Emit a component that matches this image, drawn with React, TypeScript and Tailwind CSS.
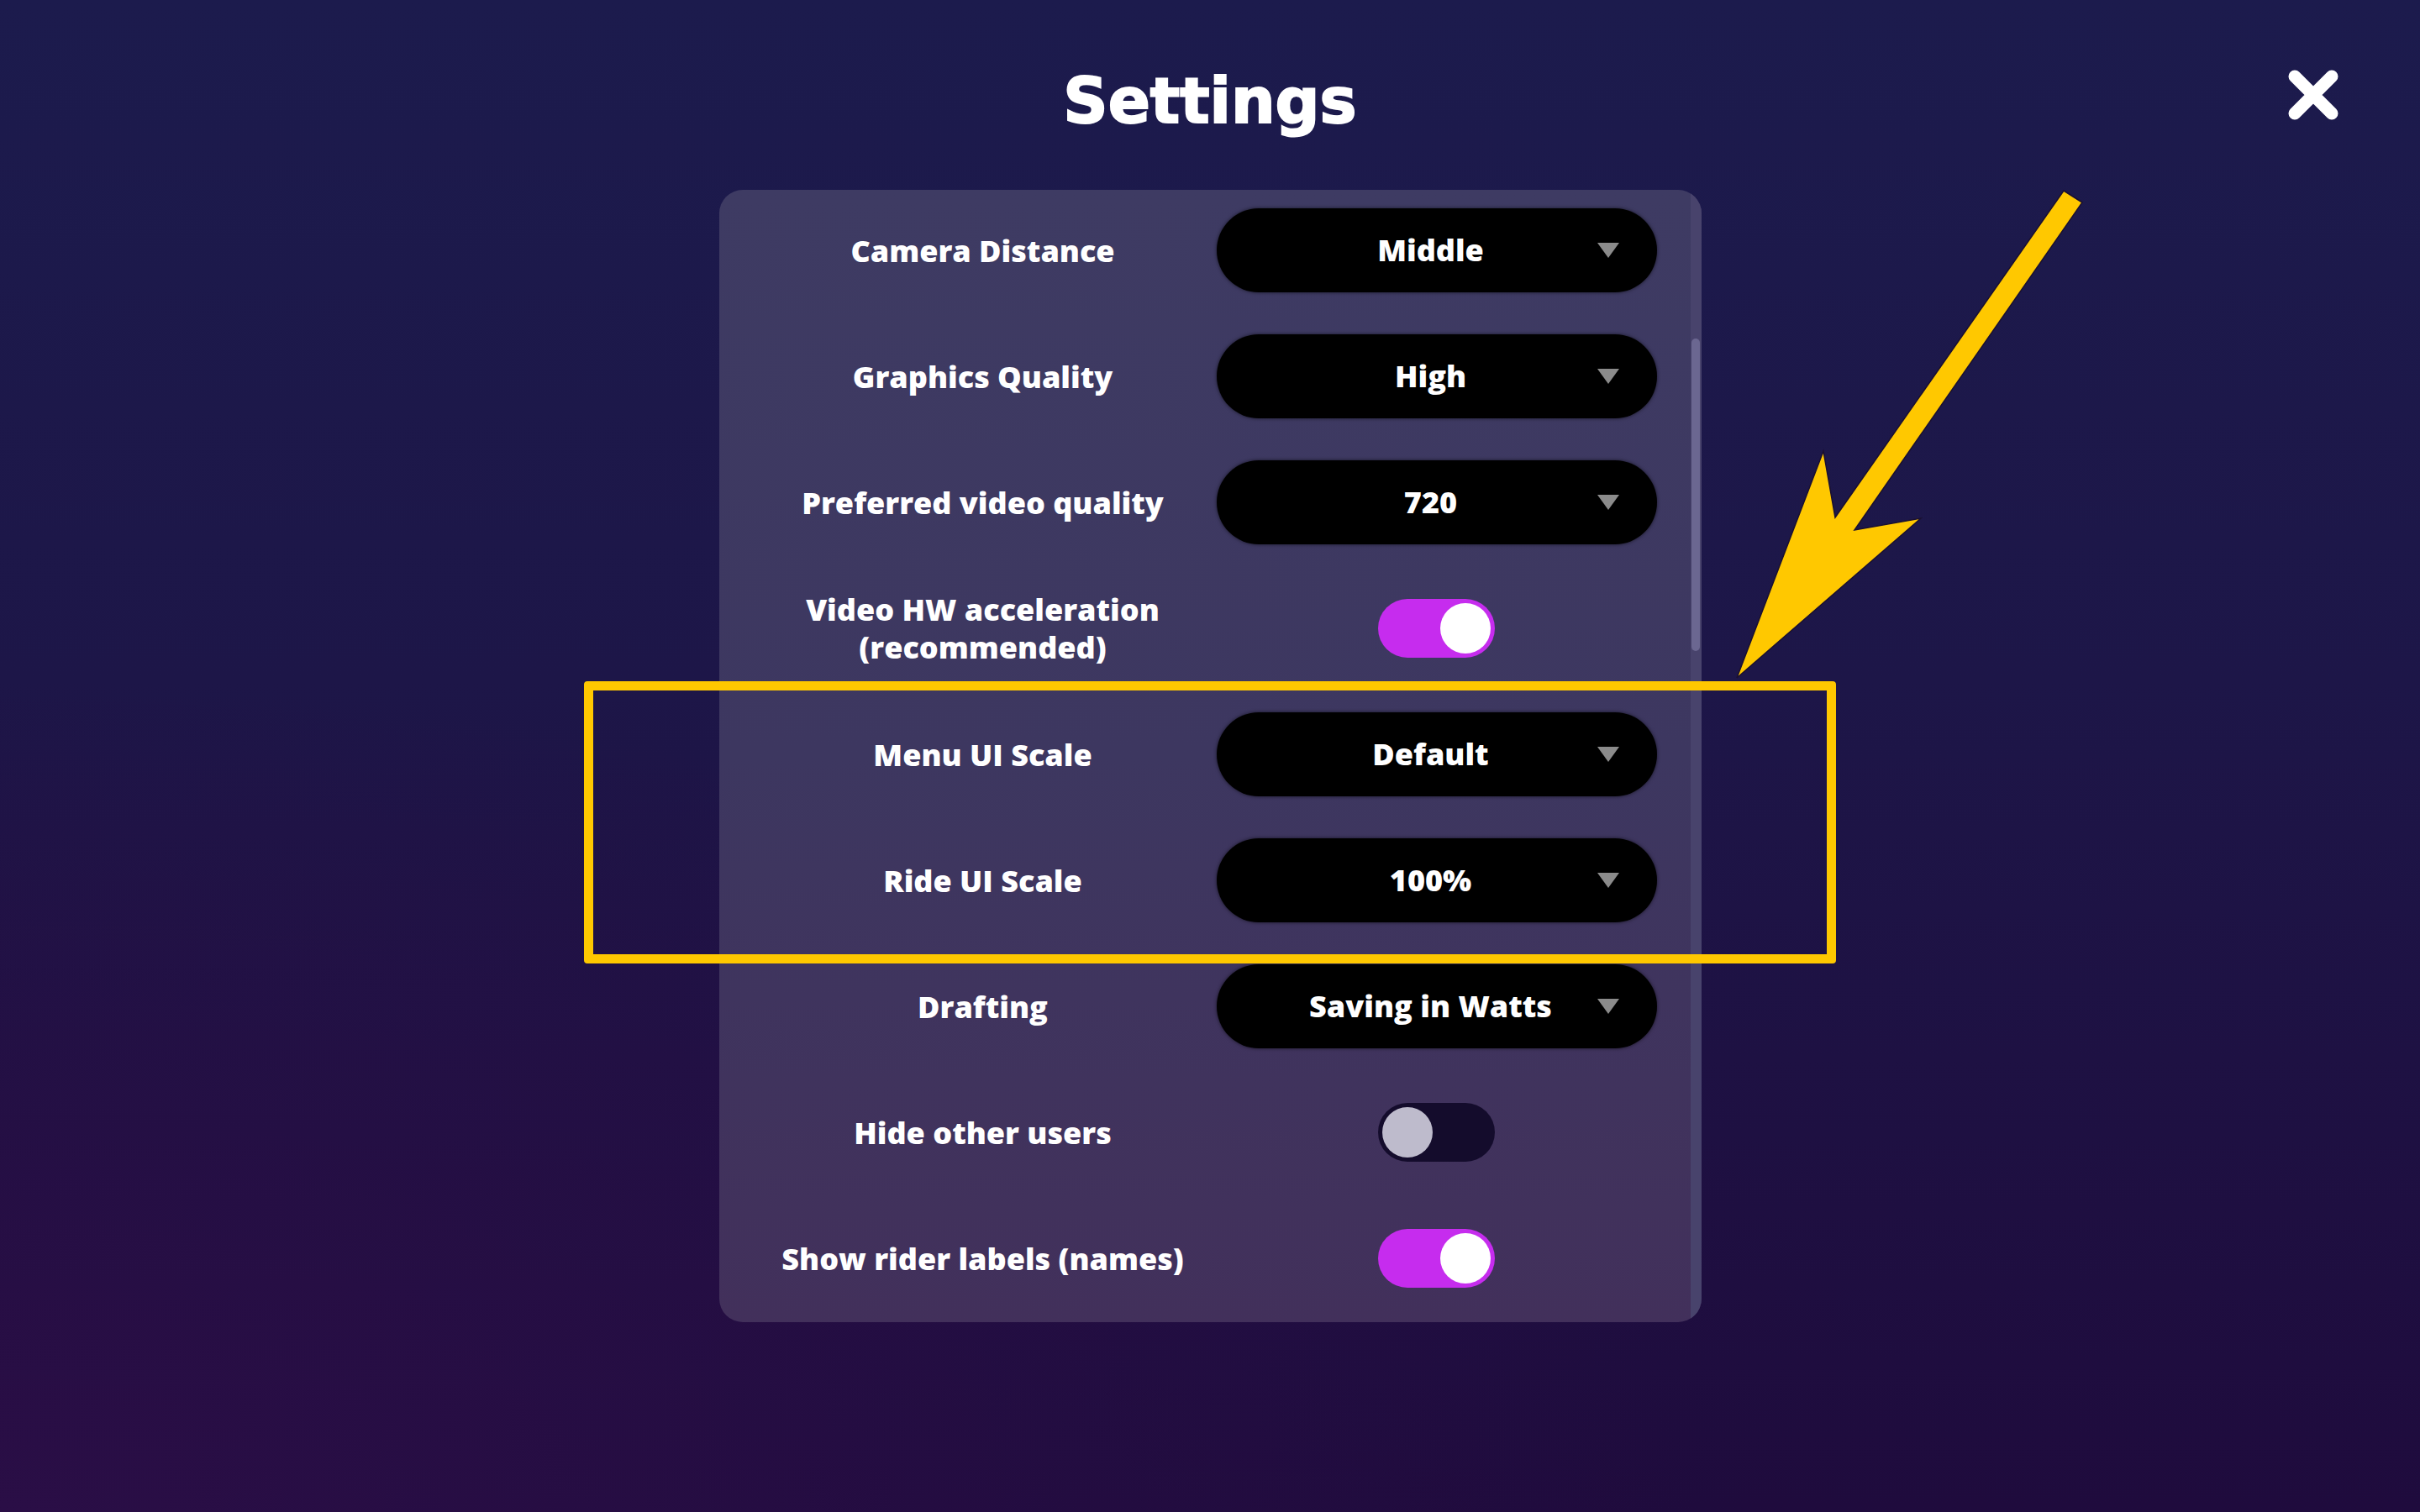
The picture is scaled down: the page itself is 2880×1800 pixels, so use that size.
import { useState } from 'react';

type Row =
  | { kind: 'select'; label: string; value: string }
  | { kind: 'toggle'; label: string[]; on: boolean };

const rows: Row[] = [
  { kind: 'select', label: 'Camera Distance', value: 'Middle' },
  { kind: 'select', label: 'Graphics Quality', value: 'High' },
  { kind: 'select', label: 'Preferred video quality', value: '720' },
  { kind: 'toggle', label: ['Video HW acceleration', '(recommended)'], on: true },
  { kind: 'select', label: 'Menu UI Scale', value: 'Default' },
  { kind: 'select', label: 'Ride UI Scale', value: '100%' },
  { kind: 'select', label: 'Drafting', value: 'Saving in Watts' },
  { kind: 'toggle', label: ['Hide other users'], on: false },
  { kind: 'toggle', label: ['Show rider labels (names)'], on: true },
];

function Select({ value }: { value: string }) {
  return (
    <div className="relative flex items-center justify-center w-[524px] h-[100px] rounded-full bg-black shadow-[0_0_4px_rgba(0,0,0,0.6)]">
      <span className="pr-[14px] text-white text-[36px] font-extrabold leading-none">{value}</span>
      <svg className="absolute right-[45px] top-[41px] w-[26px] h-[18px]" viewBox="0 0 26 18">
        <path d="M0 0 H26 L13 18 Z" fill="#8b8b8b" />
      </svg>
    </div>
  );
}

function Toggle({ initial }: { initial: boolean }) {
  const [on, setOn] = useState(initial);
  return (
    <button
      type="button"
      onClick={() => setOn(o => !o)}
      className={`flex items-center w-[139px] h-[70px] p-[5px] rounded-full ${
        on ? 'justify-end bg-[#c62cee]' : 'justify-start bg-[#140c2c]'
      }`}
    >
      <span className={`block w-[60px] h-[60px] rounded-full ${on ? 'bg-white' : 'bg-[#bebbcc]'}`} />
    </button>
  );
}

export default function App() {
  return (
    <div className="relative w-[2880px] h-[1800px] overflow-hidden font-['Open_Sans',sans-serif] bg-[radial-gradient(ellipse_70%_55%_at_0%_100%,#2a0e46_0%,transparent_100%),linear-gradient(180deg,#1c1b4d_0%,#1d1648_45%,#1f0b3d_100%)]">
      {/* header */}
      <div className="grid grid-cols-[1fr_auto_1fr] items-start pt-[83px]">
        <div />
        <h1 className="font-['DejaVu_Sans',sans-serif] font-bold text-white text-[74px] leading-none [-webkit-text-stroke:2px_white]">
          Settings
        </h1>
        <div className="flex justify-end pr-[97px]">
          <button type="button" className="w-[60px] h-[60px]">
            <svg viewBox="0 0 60 60" className="w-[60px] h-[60px]">
              <path d="M8 8 L52 52 M52 8 L8 52" stroke="white" strokeWidth="15" strokeLinecap="round" />
            </svg>
          </button>
        </div>
      </div>

      {/* settings panel */}
      <div className="mx-auto mt-[69px] flex w-[1169px] h-[1348px] rounded-[28px] overflow-hidden bg-[linear-gradient(180deg,#3e3b63_0%,#3d3760_50%,#42305b_100%)]">
        <div className="flex-1 flex flex-col gap-[50px] pl-[36px] pt-[22px] pb-[26px]">
          {rows.map((r, i) => (
            <div key={i} className="flex items-center h-[100px]">
              <div className="w-[556px] text-center text-white text-[36px] font-extrabold leading-[45px]">
                {r.kind === 'select' ? r.label : r.label.map(l => <div key={l}>{l}</div>)}
              </div>
              <div className="w-[524px] flex justify-center">
                {r.kind === 'select' ? <Select value={r.value} /> : <Toggle initial={r.on} />}
              </div>
            </div>
          ))}
        </div>
        {/* scrollbar */}
        <div className="w-[13px] flex flex-col items-center pt-[177px] bg-[#48436c]">
          <div className="w-[10px] h-[372px] rounded-full bg-[#6b6791]" />
        </div>
      </div>

      {/* highlight frame */}
      <div className="absolute left-[695px] top-[811px] w-[1490px] h-[336px] border-[11px] border-[#ffc800] rounded-[4px] pointer-events-none" />

      {/* pointer arrow */}
      <svg className="absolute inset-0 w-[2880px] h-[1800px] pointer-events-none" viewBox="0 0 2880 1800">
        <polygon
          points="2456,227 2478,241 2207,631 2286,617 2067,807 2170,537 2184,616"
          fill="#ffc800"
          stroke="#1a1030"
          strokeWidth="1.5"
          strokeLinejoin="miter"
        />
      </svg>
    </div>
  );
}
